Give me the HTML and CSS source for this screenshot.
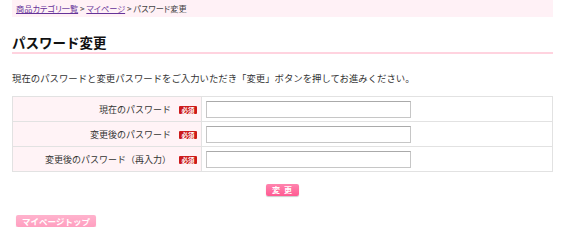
FILE: index.html
```html
<!DOCTYPE html>
<html lang="ja">
<head>
<meta charset="utf-8">
<title>パスワード変更</title>
<link rel="stylesheet" href="styles.css">
</head>
<body>
<div class="page">
  <div class="crumb">
    <a href="#" class="crumb-link">商品カテゴリ一覧</a> &gt; <a href="#" class="crumb-link">マイページ</a> &gt; パスワード変更
  </div>
  <h1 class="title">パスワード変更</h1>
  <p class="lead">現在のパスワードと変更パスワードをご入力いただき「変更」ボタンを押してお進みください。</p>
  <table class="form">
    <tr>
      <th class="label"><span class="label-text">現在のパスワード</span><span class="req">必須</span></th>
      <td class="field"><input type="password" class="input"></td>
    </tr>
    <tr>
      <th class="label"><span class="label-text">変更後のパスワード</span><span class="req">必須</span></th>
      <td class="field"><input type="password" class="input"></td>
    </tr>
    <tr>
      <th class="label"><span class="label-text">変更後のパスワード（再入力）</span><span class="req">必須</span></th>
      <td class="field"><input type="password" class="input"></td>
    </tr>
  </table>
  <div class="actions">
    <button class="btn-submit" type="button">変 更</button>
  </div>
  <div class="back">
    <a href="#" class="btn-back">マイページトップ</a>
  </div>
</div>
</body>
</html>
```

FILE: styles.css
```css
html, body {
  margin: 0;
  padding: 0;
  background: #ffffff;
}
body {
  font-family: "Noto Sans CJK JP", "Noto Sans", sans-serif;
  color: #333333;
  font-size: 9.5px;
}
.page {
  width: 541px;
  margin-left: 12px;
}
.crumb {
  height: 17px;
  line-height: 17px;
  padding: 0 4px;
  background: #fff1f6;
  font-size: 8.2px;
  color: #444444;
  font-feature-settings: "palt";
}
.crumb-link {
  color: #663399;
  text-decoration: underline;
}
.title {
  margin: 17px 0 0;
  font-size: 13.5px;
  font-weight: bold;
  line-height: 16px;
  color: #111111;
  padding-bottom: 2px;
  border-bottom: 2px solid #ffd3df;
}
.lead {
  margin: 17px 0 0;
  line-height: 14px;
  font-size: 9.4px;
}
.form {
  margin-top: 11px;
  width: 100%;
  border-collapse: collapse;
  border: 1px solid #e2e2e2;
}
.form tr {
  height: 25px;
}
.label {
  width: 180px;
  padding: 0 4px 0 4px;
  background: #fff3f6;
  border: 1px solid #e2e2e2;
  text-align: right;
  font-weight: normal;
  font-size: 9px;
  white-space: nowrap;
}
.label-text {
  vertical-align: middle;
}
.req {
  display: inline-block;
  vertical-align: middle;
  margin-left: 8px;
  width: 18px;
  height: 8px;
  line-height: 8px;
  background: #cc1a1a;
  color: #ffffff;
  font-size: 6.5px;
  font-weight: bold;
  text-align: center;
  border-radius: 1px;
}
.field {
  padding: 0 0 0 4px;
  border: 1px solid #e2e2e2;
  background: #ffffff;
}
.input {
  display: block;
  box-sizing: border-box;
  width: 205px;
  height: 17px;
  margin: 0;
  padding: 0 3px;
  border: 1px solid #c6c6c6;
  border-top-color: #aaaaaa;
  background: #ffffff;
}
.actions {
  display: flex;
  justify-content: center;
  margin-top: 12px;
}
.btn-submit {
  width: 33px;
  height: 12px;
  padding: 0;
  border: none;
  border-radius: 2px;
  background: linear-gradient(#ff84ae, #ff5a92);
  box-shadow: 0 1px 1px rgba(0,0,0,0.2);
  color: #ffffff;
  font-family: "Noto Sans CJK JP", sans-serif;
  font-size: 8px;
  font-weight: bold;
  line-height: 12px;
  letter-spacing: 1px;
}
.back {
  display: flex;
  margin-top: 19px;
  padding-left: 4px;
}
.btn-back {
  display: block;
  width: 80px;
  height: 12px;
  line-height: 12px;
  border-radius: 2px;
  background: linear-gradient(#ffb3cd, #ff9fc0);
  box-shadow: 0 1px 1px rgba(0,0,0,0.15);
  color: #ffffff;
  font-size: 8.5px;
  font-weight: bold;
  text-align: center;
  text-decoration: none;
}
```
